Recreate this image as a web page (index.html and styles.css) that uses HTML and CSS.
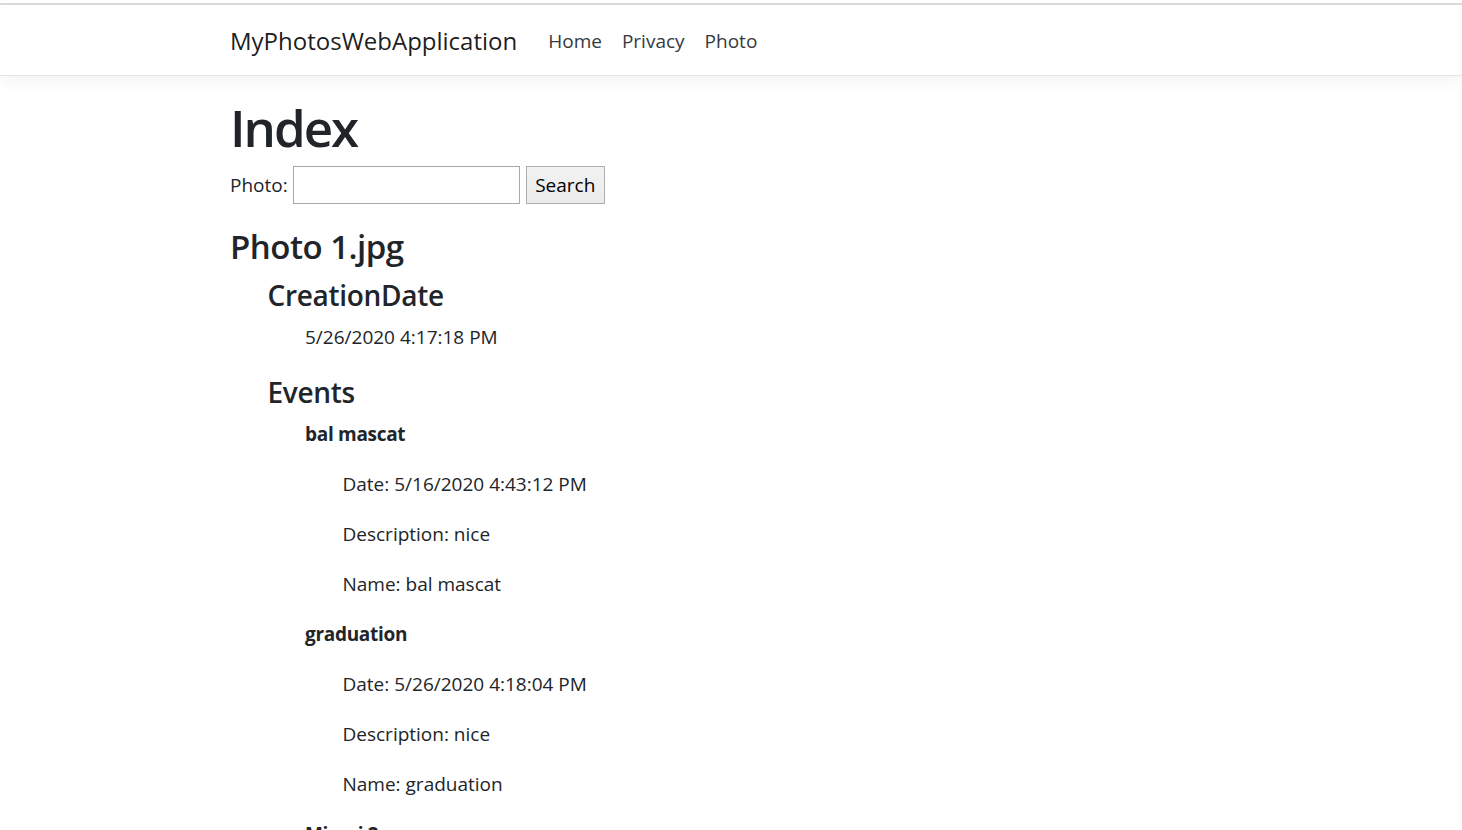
FILE: index.html
```html
<!DOCTYPE html>
<html lang="en">
<head>
<meta charset="utf-8">
<title>Index - MyPhotosWebApplication</title>
<link rel="stylesheet" href="styles.css">
</head>
<body>
<div class="topline"></div>
<header class="navbar">
  <div class="container nav-inner">
    <a class="brand" href="#">MyPhotosWebApplication</a>
    <nav class="nav-links">
      <a class="nav-link" href="#">Home</a>
      <a class="nav-link" href="#">Privacy</a>
      <a class="nav-link" href="#">Photo</a>
    </nav>
  </div>
</header>
<main class="container main">
  <h1 class="title">Index</h1>
  <form class="search-row">
    <label class="search-label" for="photo">Photo:</label>
    <input class="search-input" id="photo" type="text">
    <button class="search-btn" type="button">Search</button>
  </form>
  <section class="photo">
    <h2 class="photo-name">Photo 1.jpg</h2>
    <div class="indent">
      <h3 class="prop">CreationDate</h3>
      <div class="indent">
        <p class="val">5/26/2020 4:17:18 PM</p>
      </div>
      <h3 class="prop">Events</h3>
      <div class="indent">
        <h4 class="event">bal mascat</h4>
        <div class="indent">
          <p class="val">Date: 5/16/2020 4:43:12 PM</p>
          <p class="val">Description: nice</p>
          <p class="val">Name: bal mascat</p>
        </div>
        <h4 class="event">graduation</h4>
        <div class="indent">
          <p class="val">Date: 5/26/2020 4:18:04 PM</p>
          <p class="val">Description: nice</p>
          <p class="val">Name: graduation</p>
        </div>
        <h4 class="event">Miami 2</h4>
      </div>
    </div>
  </section>
</main>
</body>
</html>
```
FILE: styles.css
```css
html, body {
  margin: 0;
  padding: 0;
  background: #fff;
}
body {
  font-family: "Open Sans", "Noto Sans", sans-serif;
  font-size: 19px;
  line-height: 30px;
  color: #212529;
  overflow: hidden;
}
.topline {
  margin-top: 3px;
  height: 2px;
  background: #dcdce0;
}
.container {
  max-width: 1002px;
  margin: 0 auto;
}
.navbar {
  height: 70px;
  border-bottom: 1px solid #e5e5e5;
  box-shadow: 0 5px 15px rgba(0, 0, 0, 0.05);
  background: #fff;
  position: relative;
}
.nav-inner {
  display: flex;
  align-items: center;
  height: 100%;
  box-sizing: border-box;
  padding-top: 2px;
}
.brand {
  font-size: 24px;
  color: rgba(0, 0, 0, 0.9);
  text-decoration: none;
  margin-right: 21px;
}
.nav-links {
  display: flex;
}
.nav-link {
  color: #343a40;
  text-decoration: none;
  padding: 0 10px;
  font-size: 19px;
}
.main {
  padding-top: 18px;
}
.title {
  font-size: 51px;
  line-height: 67px;
  font-weight: 600;
  letter-spacing: -2px;
  margin: 0;
}
.search-row {
  display: flex;
  align-items: center;
  margin-top: 5px;
  height: 38px;
}
.search-label {
  margin-right: 5px;
}
.search-input {
  width: 227px;
  height: 38px;
  box-sizing: border-box;
  border: 1px solid #a9a9a9;
  margin: 0 6px 0 0;
  padding: 0 4px;
  font: inherit;
}
.search-btn {
  height: 38px;
  width: 79px;
  box-sizing: border-box;
  border: 1px solid #adadad;
  background: linear-gradient(#f2f2f2, #ebebeb);
  font: inherit;
  color: #000;
  padding: 0;
}
.photo-name {
  font-size: 33px;
  line-height: 41px;
  font-weight: 600;
  letter-spacing: -0.5px;
  margin: 22px 0 11px;
}
.indent {
  padding-left: 37.5px;
}
.prop {
  font-size: 28px;
  line-height: 34px;
  font-weight: 600;
  letter-spacing: -0.3px;
  margin: 0 0 10px;
}
.indent + .prop {
  margin-top: 23px;
}
.val {
  margin: 0 0 20px;
}
.event {
  font-size: 19px;
  line-height: 30px;
  font-weight: 700;
  letter-spacing: -0.3px;
  margin: 0 0 20px;
}
```
